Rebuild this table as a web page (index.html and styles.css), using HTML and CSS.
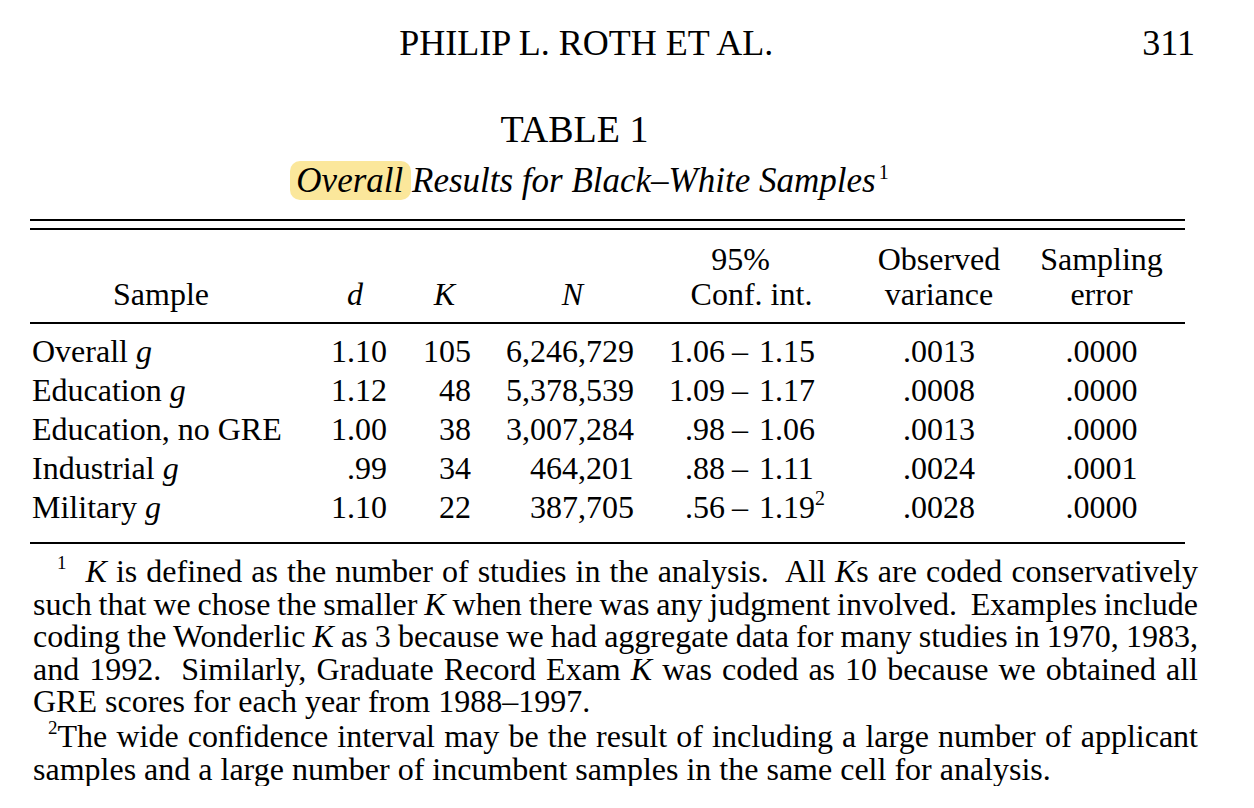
FILE: index.html
```html
<!DOCTYPE html>
<html lang="en">
<head>
<meta charset="utf-8">
<title>Table 1 – Overall Results for Black–White Samples</title>
<link rel="stylesheet" href="styles.css">
</head>
<body>
<main class="page">
  <header class="running-head">
    <span class="rh-title">PHILIP L. ROTH ET AL.</span>
    <span class="rh-folio">311</span>
  </header>

  <div class="caption">
    <div class="table-label">TABLE 1</div>
    <div class="table-title"><span class="hl">Overall</span> Results for Black–White Samples<sup>1</sup></div>
  </div>

  <div class="rule-double"></div>

  <table class="data">
    <colgroup>
      <col class="c-sample">
      <col class="c-d">
      <col class="c-k">
      <col class="c-n">
      <col class="c-ci">
      <col class="c-obs">
      <col class="c-samp">
    </colgroup>
    <thead>
      <tr>
        <th class="h-sample">Sample</th>
        <th class="h-d"><i>d</i></th>
        <th class="h-k"><i>K</i></th>
        <th class="h-n"><i>N</i></th>
        <th class="h-ci"><span class="ci-top">95%</span><br><span class="ci-bot">Conf. int.</span></th>
        <th class="h-mid">Observed<br>variance</th>
        <th class="h-mid">Sampling<br>error</th>
      </tr>
    </thead>
    <tbody>
      <tr>
        <td class="label">Overall <i>g</i></td>
        <td class="num">1.10</td>
        <td class="num">105</td>
        <td class="num">6,246,729</td>
        <td class="ci"><span class="lo">1.06</span><span class="dash">–</span><span class="hi">1.15</span></td>
        <td class="mid">.0013</td>
        <td class="mid">.0000</td>
      </tr>
      <tr>
        <td class="label">Education <i>g</i></td>
        <td class="num">1.12</td>
        <td class="num">48</td>
        <td class="num">5,378,539</td>
        <td class="ci"><span class="lo">1.09</span><span class="dash">–</span><span class="hi">1.17</span></td>
        <td class="mid">.0008</td>
        <td class="mid">.0000</td>
      </tr>
      <tr>
        <td class="label">Education, no GRE</td>
        <td class="num">1.00</td>
        <td class="num">38</td>
        <td class="num">3,007,284</td>
        <td class="ci"><span class="lo">.98</span><span class="dash">–</span><span class="hi">1.06</span></td>
        <td class="mid">.0013</td>
        <td class="mid">.0000</td>
      </tr>
      <tr>
        <td class="label">Industrial <i>g</i></td>
        <td class="num">.99</td>
        <td class="num">34</td>
        <td class="num">464,201</td>
        <td class="ci"><span class="lo">.88</span><span class="dash">–</span><span class="hi">1.11</span></td>
        <td class="mid">.0024</td>
        <td class="mid">.0001</td>
      </tr>
      <tr>
        <td class="label">Military <i>g</i></td>
        <td class="num">1.10</td>
        <td class="num">22</td>
        <td class="num">387,705</td>
        <td class="ci"><span class="lo">.56</span><span class="dash">–</span><span class="hi">1.19<sup>2</sup></span></td>
        <td class="mid">.0028</td>
        <td class="mid">.0000</td>
      </tr>
    </tbody>
  </table>

  <div class="notes">
    <p class="note">
      <span class="line indent1"><sup class="fn1">1</sup> <i>K</i> is defined as the number of studies in the analysis.&nbsp; All <i>K</i>s are coded conservatively</span>
      <span class="line">such that we chose the smaller <i>K</i> when there was any judgment involved.&nbsp; Examples include</span>
      <span class="line">coding the Wonderlic <i>K</i> as 3 because we had aggregate data for many studies in 1970, 1983,</span>
      <span class="line">and 1992.&nbsp; Similarly, Graduate Record Exam <i>K</i> was coded as 10 because we obtained all</span>
      <span class="line last">GRE scores for each year from 1988–1997.</span>
    </p>
    <p class="note">
      <span class="line indent2"><sup>2</sup>The wide confidence interval may be the result of including a large number of applicant</span>
      <span class="line last">samples and a large number of incumbent samples in the same cell for analysis.</span>
    </p>
  </div>
</main>
</body>
</html>
```

FILE: styles.css
```css
html, body {
  margin: 0;
  padding: 0;
  background: #ffffff;
}

body {
  color: #000000;
  font-family: "Liberation Serif", "Times New Roman", serif;
}

.page {
  width: 1254px;
  box-sizing: border-box;
  padding: 25px 0 0 30px;
}

/* running head */
.running-head {
  display: flex;
  width: 1165px;
  font-size: 36px;
  line-height: 36px;
}

.rh-title {
  flex: 1;
  text-align: center;
}

/* caption */
.caption {
  width: 1155px;
}

.table-label {
  margin-top: 49px;
  font-size: 38px;
  line-height: 38px;
  text-align: center;
  padding-right: 66px;
}

.table-title {
  margin-top: 14px;
  font-size: 35px;
  line-height: 38px;
  font-style: italic;
  text-align: center;
  padding-right: 30px;
}

.table-title sup {
  font-style: normal;
  font-size: 20px;
  line-height: 0;
  vertical-align: 13px;
  margin-left: 3px;
}

.hl {
  background: #fbe79b;
  border-radius: 10px;
  padding: 0 8px 0 6px;
  margin: 0 -8px 0 -6px;
}

/* rules */
.rule-double {
  margin-top: 19px;
  width: 1155px;
  height: 7px;
  border-top: 2px solid #000000;
  border-bottom: 2px solid #000000;
  box-sizing: content-box;
}

/* table */
.data {
  width: 1155px;
  border-collapse: separate;
  border-spacing: 0;
  table-layout: fixed;
  font-size: 32px;
}

.c-sample { width: 270px; }
.c-d { width: 90px; }
.c-k { width: 84px; }
.c-n { width: 163px; }
.c-ci { width: 223px; }
.c-obs { width: 158px; }
.c-samp { width: 167px; }

.data th {
  font-weight: normal;
  line-height: 35px;
  padding: 12px 0 10px;
  vertical-align: bottom;
  border-bottom: 2px solid #000000;
  white-space: nowrap;
}

.h-sample {
  text-align: center;
  padding-right: 8px !important;
}

.h-d {
  text-align: right;
  padding-right: 27px !important;
}

.h-k {
  text-align: right;
  padding-right: 19px !important;
}

.h-n {
  text-align: right;
  padding-right: 54px !important;
}

.h-ci,
.h-mid {
  text-align: center;
}

.ci-top {
  padding-right: 16px;
}

.ci-bot {
  padding-left: 6px;
}

.data td {
  line-height: 39px;
  padding: 0;
  white-space: nowrap;
}

.data tbody tr:first-child td {
  padding-top: 8px;
}

.data tbody tr:last-child td {
  padding-bottom: 15px;
  border-bottom: 2px solid #000000;
}

.label {
  padding-left: 2px !important;
}

.num {
  text-align: right;
  padding-right: 3px !important;
}

.mid {
  text-align: center;
}

.lo {
  display: inline-block;
  width: 88px;
  text-align: right;
}

.dash {
  display: inline-block;
  width: 27px;
  padding-left: 7px;
  text-align: left;
}

.hi sup {
  font-size: 20px;
  line-height: 0;
  vertical-align: 13px;
}

/* notes */
.notes {
  width: 1165px;
  margin: 11px 0 0 3px;
  font-size: 32px;
  line-height: 32.6px;
}

.note {
  margin: 0;
}

.note + .note {
  margin-top: 2.5px;
}

.line {
  display: block;
  text-align: justify;
  text-align-last: justify;
  word-spacing: -3px;
}

.line.last {
  text-align-last: left;
  word-spacing: normal;
}

.indent1 {
  text-indent: 24px;
}

.indent2 {
  text-indent: 15px;
}

.note sup {
  font-size: 19px;
  line-height: 0;
  vertical-align: 13px;
}

.note .fn1 {
  margin-right: 10px;
}
```
